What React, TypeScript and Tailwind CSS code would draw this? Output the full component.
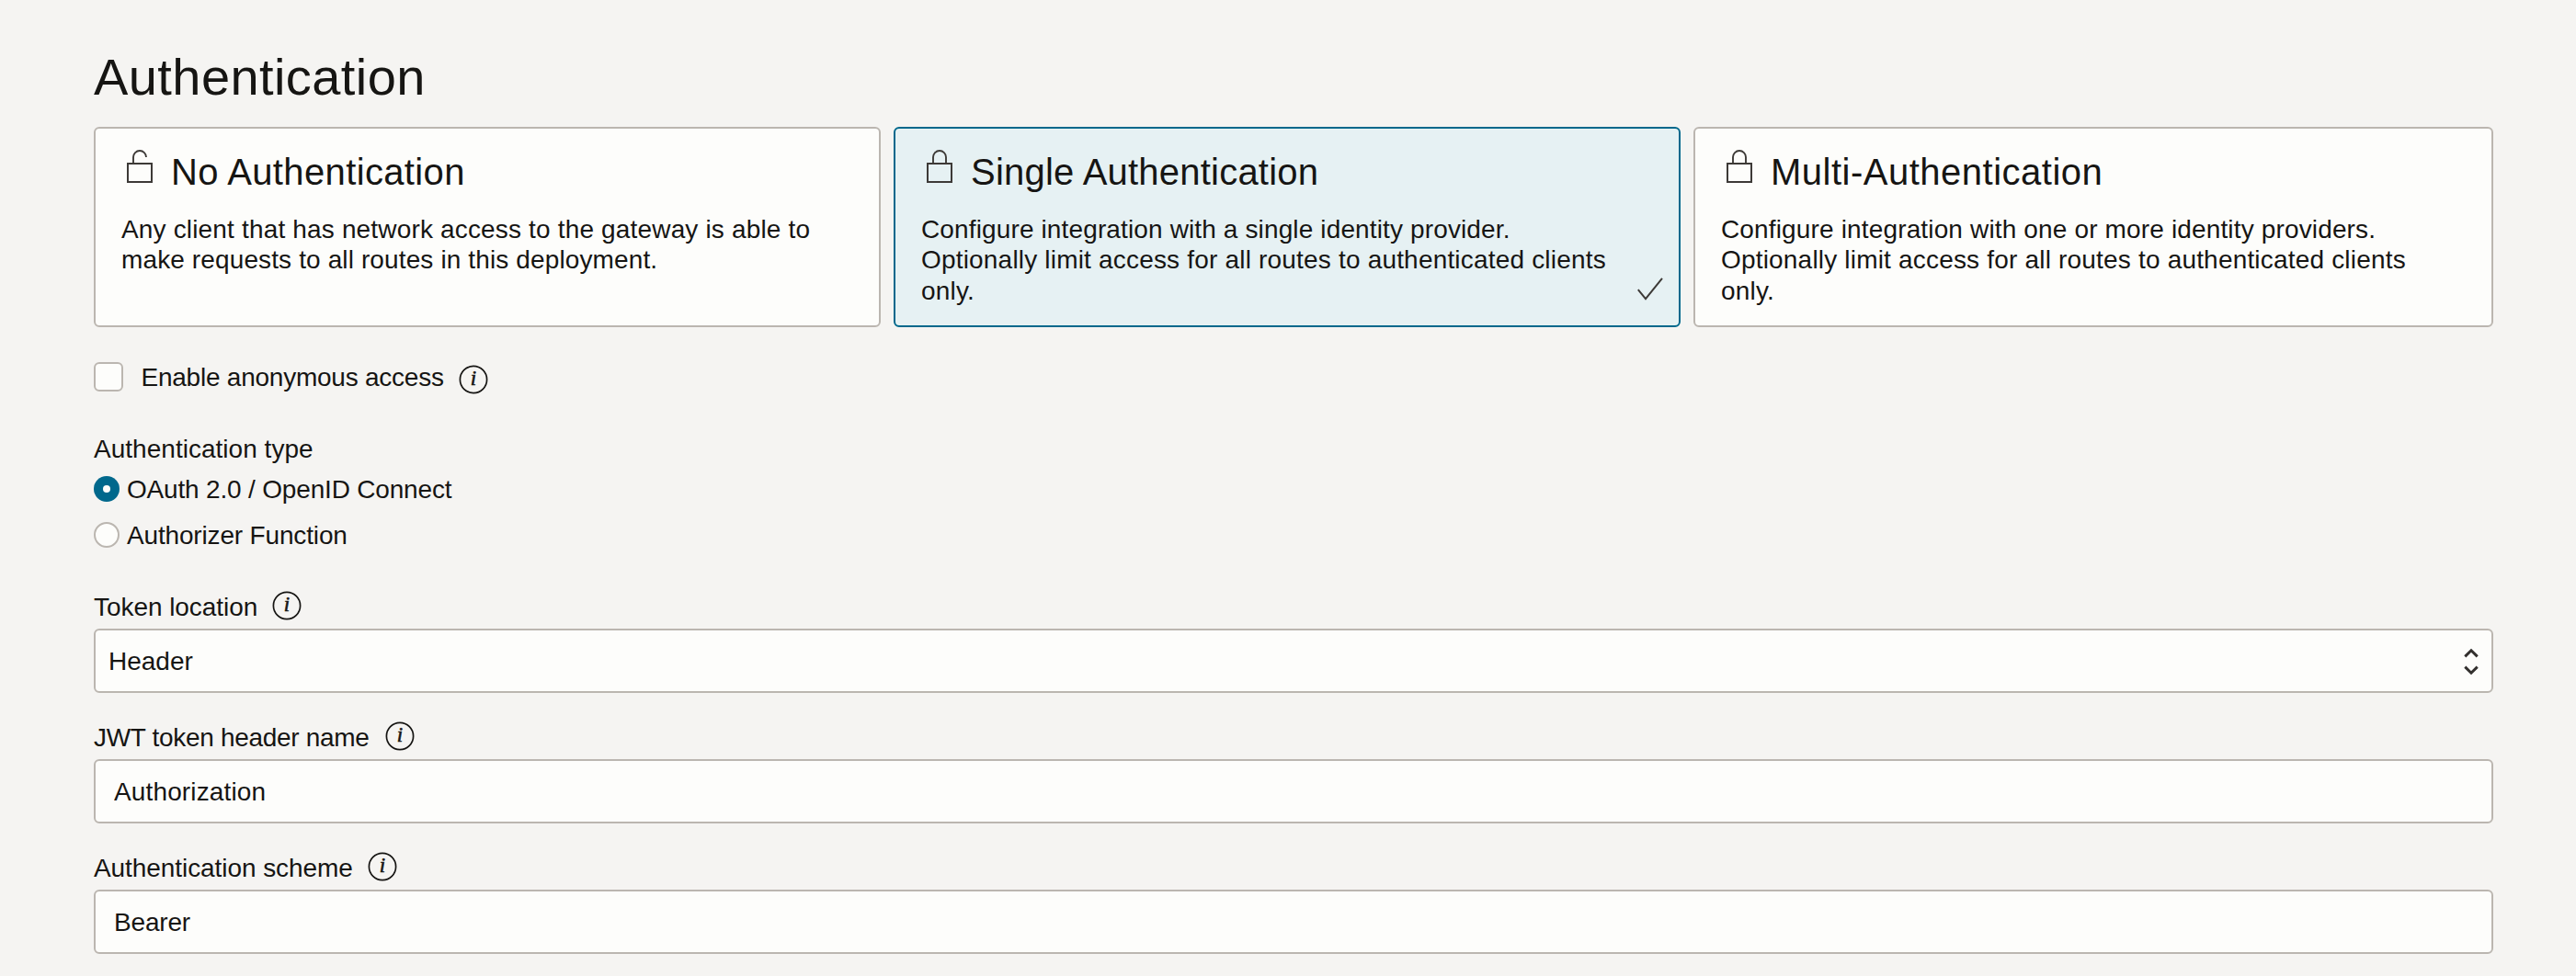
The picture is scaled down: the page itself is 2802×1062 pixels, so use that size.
import { type ReactNode } from 'react';

function LockIcon({ open = false }: { open?: boolean }) {
  return (
    <svg className="mt-[3px] h-9 w-7 shrink-0" viewBox="0 0 28 36" fill="none" stroke="#3d3a37" strokeWidth="2">
      <rect x="1" y="15" width="26" height="20" />
      <path d={open ? 'M7 14V8a7 7 0 0 1 14 0' : 'M7 14V8a7 7 0 0 1 14 0V14'} strokeWidth="1.9" />
    </svg>
  );
}

function InfoIcon({ className }: { className: string }) {
  return (
    <svg className={`h-8 w-8 shrink-0 ${className}`} viewBox="0 0 32 32" fill="none">
      <circle cx="16" cy="16" r="14.6" stroke="#161513" strokeWidth="1.7" />
      <text
        x="16"
        y="22.3"
        textAnchor="middle"
        fill="#161513"
        stroke="#161513"
        strokeWidth="0.6"
        className="font-['Liberation_Serif',serif] text-[23px] italic"
      >
        i
      </text>
    </svg>
  );
}

interface CardProps {
  title: string;
  titleClass: string;
  selected?: boolean;
  open?: boolean;
  children: ReactNode;
}

function AuthCard({ title, titleClass, selected = false, open = false, children }: CardProps) {
  return (
    <button
      type="button"
      className={`relative flex h-[218px] flex-col items-start rounded-[6px] border-2 pt-[20px] pl-7 text-left ${
        selected ? 'border-[#00688c] bg-[#e6f1f3]' : 'border-[#bbb6b0] bg-[#fdfdfb]'
      }`}
    >
      <span className="flex items-start pl-1.5">
        <LockIcon open={open} />
        <span className={`mt-[5px] ml-5 text-[40px] leading-[45px] ${titleClass}`}>{title}</span>
      </span>
      <span className="mt-[22.75px] block leading-[33.4px] whitespace-nowrap">{children}</span>
      {selected && (
        <svg
          className="absolute right-[17px] bottom-[27px] h-[25px] w-[28px]"
          viewBox="0 0 28 25"
          fill="none"
          stroke="#3d3a37"
          strokeWidth="2"
        >
          <path d="M.8 13.2 9 23.2 27 .8" />
        </svg>
      )}
    </button>
  );
}

function FieldLabel({ className, iconClass, children }: { className: string; iconClass: string; children: ReactNode }) {
  return (
    <div className="flex h-[41px] items-start">
      <span className={`mt-[2px] ${className}`}>{children}</span>
      <InfoIcon className={iconClass} />
    </div>
  );
}

function TextField({ value, className }: { value: string; className: string }) {
  return (
    <input
      defaultValue={value}
      className={`block h-[70px] w-full rounded-[6px] border-2 border-[#bbb6b0] bg-[#fdfdfb] pt-[18px] pb-[17px] pl-5 leading-[31px] outline-none ${className}`}
    />
  );
}

export default function App() {
  return (
    <main className="h-[1062px] w-[2802px] overflow-hidden bg-[#f5f4f2] pt-[52px] pr-[90px] pl-[102px] font-['Liberation_Sans',Arial,sans-serif] text-[28px] leading-[31px] text-[#161513]">
      <h1 className="mb-[23px] text-[56px] leading-[63px] tracking-[0.42px]">Authentication</h1>

      <section className="grid grid-cols-[856px_856px_870px] gap-[14px]">
        <AuthCard title="No Authentication" titleClass="tracking-[0.37px]" open>
          <span className="block tracking-[0.165px]">Any client that has network access to the gateway is able to</span>
          <span className="block tracking-[0.123px]">make requests to all routes in this deployment.</span>
        </AuthCard>
        <AuthCard title="Single Authentication" titleClass="tracking-[0.22px]" selected>
          <span className="block tracking-[0.132px]">Configure integration with a single identity provider.</span>
          <span className="block tracking-[0.188px]">Optionally limit access for all routes to authenticated clients</span>
          <span className="block tracking-[0.178px]">only.</span>
        </AuthCard>
        <AuthCard title="Multi-Authentication" titleClass="tracking-[0.5px]">
          <span className="block tracking-[0.15px]">Configure integration with one or more identity providers.</span>
          <span className="block tracking-[0.188px]">Optionally limit access for all routes to authenticated clients</span>
          <span className="block tracking-[0.178px]">only.</span>
        </AuthCard>
      </section>

      <div className="mt-[38px] flex h-8 items-start">
        <span role="checkbox" aria-checked="false" className="h-8 w-8 rounded-[6px] border-2 border-[#bbb6b0] bg-[#fdfdfb]" />
        <span className="mt-px ml-[19.5px] tracking-[-0.238px]">Enable anonymous access</span>
        <InfoIcon className="mt-[3px] ml-[16.5px]" />
      </div>

      <div className="mt-[47px] tracking-[0.023px]">Authentication type</div>
      <div className="mt-[13px] flex h-[31px] items-start">
        <span role="radio" aria-checked="true" className="mt-px grid h-7 w-7 place-items-center rounded-full bg-[#00688c]">
          <span className="h-2 w-2 rounded-full bg-[#fdfdfb]" />
        </span>
        <span className="ml-[8px] tracking-[-0.18px]">OAuth 2.0 / OpenID Connect</span>
      </div>
      <div className="mt-[19px] flex h-[31px] items-start">
        <span role="radio" aria-checked="false" className="mt-px h-7 w-7 rounded-full border-2 border-[#bbb6b0] bg-[#fdfdfb]" />
        <span className="ml-[8px] tracking-[-0.162px]">Authorizer Function</span>
      </div>

      <div className="mt-[45px]">
        <FieldLabel className="tracking-[-0.056px]" iconClass="ml-4">Token location</FieldLabel>
        <div className="flex h-[70px] items-start justify-between rounded-[6px] border-2 border-[#bbb6b0] bg-[#fdfdfb] pt-[18px] pr-3 pl-3.5">
          <span>Header</span>
          <svg className="h-8 w-5" viewBox="0 0 20 32" fill="none" stroke="#33302e" strokeWidth="3">
            <path d="m3.3 10.4 6.7-6.6 6.7 6.6M3.3 21.6l6.7 6.6 6.7-6.6" />
          </svg>
        </div>
      </div>
      <div className="mt-[31px]">
        <FieldLabel className="tracking-[-0.31px]" iconClass="ml-[17px]">JWT token header name</FieldLabel>
        <TextField value="Authorization" className="tracking-[0.137px]" />
      </div>
      <div className="mt-[31px]">
        <FieldLabel className="tracking-[-0.07px]" iconClass="ml-4">Authentication scheme</FieldLabel>
        <TextField value="Bearer" className="tracking-[-0.183px]" />
      </div>
    </main>
  );
}
